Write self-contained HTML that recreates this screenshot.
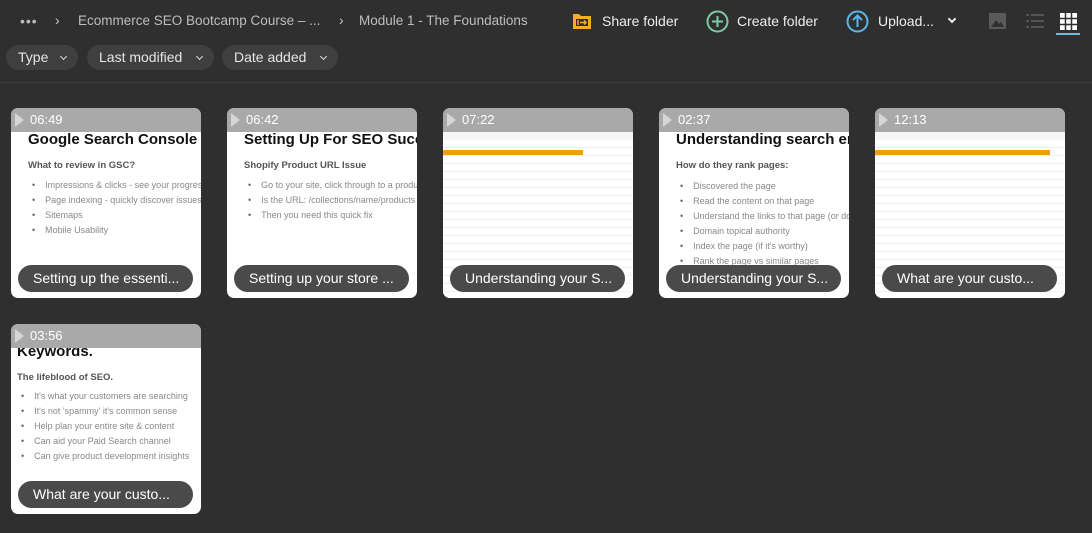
<!DOCTYPE html>
<html><head><meta charset="utf-8"><style>
*{box-sizing:border-box;margin:0;padding:0}
body{width:1092px;height:533px;background:#2f2f2f;font-family:"Liberation Sans",sans-serif;color:#c8c8c8;position:relative;overflow:hidden}
.t{position:absolute;white-space:nowrap}
.pill{position:absolute;top:45px;height:25px;background:#3f3f3f;border-radius:13px;color:#e6e6e6;font-size:14px;line-height:25px;padding-left:12px}
.pill:after{content:"";position:absolute;right:12px;top:9px;width:4px;height:4px;border-right:1.5px solid #ddd;border-bottom:1.5px solid #ddd;transform:rotate(45deg)}
.card{position:absolute;width:190px;height:190px;background:#fff;border-radius:7px;overflow:hidden}
.bar{position:absolute;left:0;top:0;width:100%;height:24px;background:#a9a9a9;color:#fff;font-size:13px;line-height:24px;padding-left:19px}
.bar:before{content:"";position:absolute;left:4px;top:5px;border-left:9px solid #d5d5d5;border-top:7px solid transparent;border-bottom:7px solid transparent}
.cap{position:absolute;left:7px;bottom:6px;width:175px;height:27px;background:#4a4a4a;border-radius:14px;color:#fff;font-size:14px;line-height:27px;padding-left:15px;white-space:nowrap}
.h{position:absolute;left:17px;top:23px;font-weight:bold;font-size:15px;color:#111;white-space:nowrap}
.s{position:absolute;left:17px;font-weight:bold;font-size:9.5px;color:#555;white-space:nowrap}
ul{position:absolute;left:21px;list-style:none;font-size:9px;color:#888;white-space:nowrap}
ul li{height:15px}
ul li:before{content:"•";margin-right:10px;color:#666}
.sheet{position:absolute;left:0;top:24px;width:100%;height:166px;background:#fff;background-image:repeating-linear-gradient(#fff 0 7px,#f0f0f0 7px 8px)}
</style></head><body>
<div class="t" style="left:20px;top:13px;font-size:14px;color:#bbb;letter-spacing:1px">•••</div>
<div class="t" style="left:55px;top:12px;font-size:14px">›</div>
<div class="t" style="left:78px;top:13px;font-size:13.5px;color:#bdbdbd">Ecommerce SEO Bootcamp Course – ...</div>
<div class="t" style="left:339px;top:12px;font-size:14px">›</div>
<div class="t" style="left:359px;top:13px;font-size:13.5px;color:#bdbdbd">Module 1 - The Foundations</div>
<svg style="position:absolute;left:572px;top:12px" width="20" height="18"><path d="M1 2h6l2 2h10v13H1z" fill="#f2b01e"/><rect x="4" y="7" width="12" height="7" fill="#2f2f2f"/><path d="M6 8v5M8 10.5h6M12 8.5l2 2-2 2" stroke="#f2b01e" stroke-width="1.5" fill="none"/></svg>
<div class="t" style="left:602px;top:13px;font-size:14px;color:#eee">Share folder</div>
<svg style="position:absolute;left:706px;top:10px" width="23" height="23"><circle cx="11.5" cy="11.5" r="10" stroke="#7ec9a5" stroke-width="2" fill="none"/><path d="M11.5 6v11M6 11.5h11" stroke="#7ec9a5" stroke-width="2"/></svg>
<div class="t" style="left:737px;top:13px;font-size:14px;color:#eee">Create folder</div>
<svg style="position:absolute;left:846px;top:10px" width="23" height="23"><circle cx="11.5" cy="11.5" r="10" stroke="#5ab6e8" stroke-width="2" fill="none"/><path d="M11.5 17V6M7 10l4.5-4.5L16 10" stroke="#5ab6e8" stroke-width="2" fill="none"/></svg>
<div class="t" style="left:878px;top:13px;font-size:14px;color:#eee">Upload...</div>
<div class="t" style="left:949px;top:16px;width:6px;height:6px;border-right:2px solid #eee;border-bottom:2px solid #eee;transform:rotate(45deg)"></div>
<svg style="position:absolute;left:989px;top:13px" width="17" height="16"><rect width="17" height="16" fill="#5a5a5a"/><path d="M2 14l5-7 3 4 2-2 3 5z" fill="#2f2f2f"/></svg>
<svg style="position:absolute;left:1026px;top:14px" width="18" height="14"><path d="M0 1h3M5 1h13M0 7h3M5 7h13M0 13h3M5 13h13" stroke="#555" stroke-width="2"/></svg>
<svg style="position:absolute;left:1060px;top:13px" width="17" height="17"><path d="M0 0h17v17H0z" fill="#fff"/><path d="M5.5 0v17M11.5 0v17M0 5.5h17M0 11.5h17" stroke="#2f2f2f" stroke-width="1.5"/></svg>
<div style="position:absolute;left:1056px;top:33px;width:24px;height:2px;background:#7ab9d6"></div>
<div class="pill" style="left:6px;width:72px">Type</div>
<div class="pill" style="left:87px;width:127px">Last modified</div>
<div class="pill" style="left:222px;width:116px">Date added</div>
<div style="position:absolute;left:0;top:82px;width:1092px;height:1px;background:#3c3c3c"></div>

<div class="card" style="left:11px;top:108px"><div class="h">Google Search Console</div><div class="s" style="top:52px">What to review in GSC?</div><ul style="top:72px"><li>Impressions &amp; clicks - see your progress</li><li>Page indexing - quickly discover issues</li><li>Sitemaps</li><li>Mobile Usability</li></ul><div class="bar">06:49</div><div class="cap">Setting up the essenti...</div></div>
<div class="card" style="left:227px;top:108px"><div class="h">Setting Up For SEO Success</div><div class="s" style="top:52px">Shopify Product URL Issue</div><ul style="top:72px"><li>Go to your site, click through to a product</li><li>Is the URL: /collections/name/products</li><li>Then you need this quick fix</li></ul><div class="bar">06:42</div><div class="cap">Setting up your store ...</div></div>
<div class="card" style="left:443px;top:108px"><div class="sheet"></div><div style="position:absolute;left:0;top:24px;width:100%;height:8px;background:#f4f6f8"></div><div style="position:absolute;left:0;top:42px;width:140px;height:5px;background:#f39c12"></div><div class="bar">07:22</div><div class="cap">Understanding your S...</div></div>
<div class="card" style="left:659px;top:108px"><div class="h">Understanding search engines</div><div class="s" style="top:52px">How do they rank pages:</div><ul style="top:73px"><li>Discovered the page</li><li>Read the content on that page</li><li>Understand the links to that page (or domain)</li><li>Domain topical authority</li><li>Index the page (if it's worthy)</li><li>Rank the page vs similar pages</li></ul><div class="bar">02:37</div><div class="cap">Understanding your S...</div></div>
<div class="card" style="left:875px;top:108px"><div class="sheet"></div><div style="position:absolute;left:0;top:24px;width:100%;height:8px;background:#f4f6f8"></div><div style="position:absolute;left:0;top:42px;width:175px;height:5px;background:#f39c12"></div><div class="bar">12:13</div><div class="cap">What are your custo...</div></div>
<div class="card" style="left:11px;top:324px"><div class="h" style="left:6px;top:19px">Keywords.</div><div class="s" style="left:6px;top:48px">The lifeblood of SEO.</div><ul style="left:10px;top:67px"><li>It's what your customers are searching</li><li>It's not 'spammy' it's common sense</li><li>Help plan your entire site &amp; content</li><li>Can aid your Paid Search channel</li><li>Can give product development insights</li></ul><div class="bar">03:56</div><div class="cap">What are your custo...</div></div>
</body></html>
